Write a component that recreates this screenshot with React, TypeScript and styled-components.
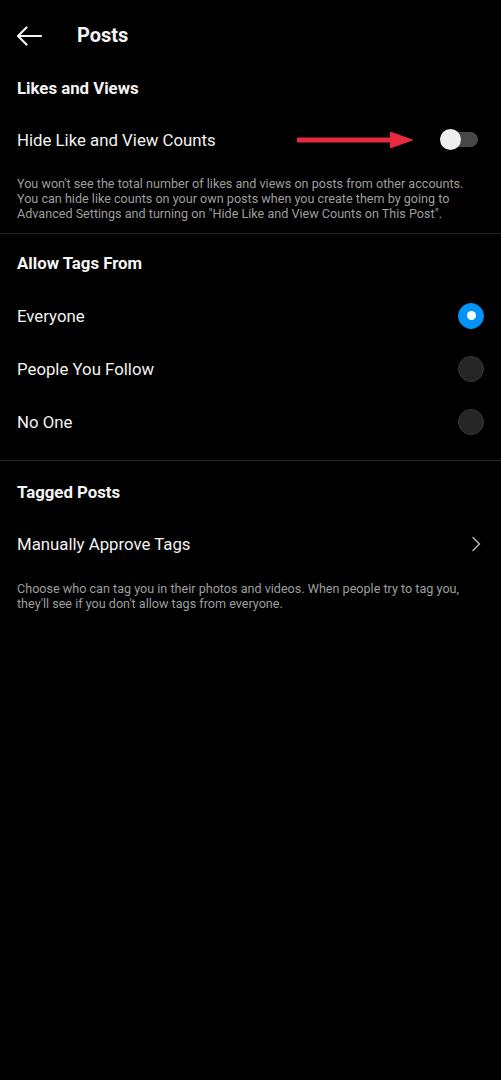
import React, { useState } from 'react';
import styled, { createGlobalStyle } from 'styled-components';

const GlobalStyle = createGlobalStyle`
    html, body {
        margin: 0;
        padding: 0;
        background: #000;
    }
    body {
        font-family: Roboto, "Liberation Sans", Arial, sans-serif;
        -webkit-font-smoothing: antialiased;
    }
`;

const tagOptions = ['Everyone', 'People You Follow', 'No One'];

const App: React.FC = () => {
    const [tagsFrom, setTagsFrom] = useState('Everyone');
    const [hideCounts, setHideCounts] = useState(false);

    return (
        <Page>
            <GlobalStyle />
            <Header>
                <BackButton aria-label="Back">
                    <svg width="26" height="20" viewBox="0 0 26 20" fill="none">
                        <path d="M25 10H2M10.5 1.5L2 10l8.5 8.5" stroke="#f2f2f2" strokeWidth="2.2" strokeLinecap="round" strokeLinejoin="round" />
                    </svg>
                </BackButton>
                <Title>Posts</Title>
            </Header>

            <Section>
                <SectionTitle>Likes and Views</SectionTitle>
                <Row $top={7}>
                    <RowLabel>Hide Like and View Counts</RowLabel>
                    <Pointer width="118" height="18" viewBox="0 0 118 18">
                        <rect x="0" y="6.5" width="96" height="5" fill="#e8293f" />
                        <path d="M93 0.5L117 9L93 17.5Z" fill="#e8293f" />
                    </Pointer>
                    <Toggle $on={hideCounts} onClick={() => setHideCounts(!hideCounts)}>
                        <Thumb $on={hideCounts} />
                    </Toggle>
                </Row>
                <Note $top={10} $bottom={12}>
                    You won't see the total number of likes and views on posts from other accounts.<br />
                    You can hide like counts on your own posts when you create them by going to<br />
                    Advanced Settings and turning on "Hide Like and View Counts on This Post".
                </Note>
            </Section>

            <Divider />

            <Section>
                <SectionTitle $top={11}>Allow Tags From</SectionTitle>
                <Options>
                    {tagOptions.map((opt) => (
                        <Row key={opt} onClick={() => setTagsFrom(opt)}>
                            <RowLabel>{opt}</RowLabel>
                            <Radio $checked={tagsFrom === opt} />
                        </Row>
                    ))}
                </Options>
            </Section>

            <Divider />

            <Section>
                <SectionTitle $top={13}>Tagged Posts</SectionTitle>
                <Row $top={7}>
                    <RowLabel>Manually Approve Tags</RowLabel>
                    <Chevron width="10" height="16" viewBox="0 0 10 16" fill="none">
                        <path d="M2 1.5L8.5 8L2 14.5" stroke="#b0b0b0" strokeWidth="1.6" strokeLinecap="round" strokeLinejoin="round" />
                    </Chevron>
                </Row>
                <Note $top={11} $bottom={0}>
                    Choose who can tag you in their photos and videos. When people try to tag you,<br />
                    they'll see if you don't allow tags from everyone.
                </Note>
            </Section>
        </Page>
    );
};

export default App;

const Page = styled.div`
    width: 501px;
    min-height: 1080px;
    background: #000;
    color: #f5f5f5;
    user-select: none;
`;

const Header = styled.div`
    height: 70px;
    display: flex;
    align-items: center;
    padding-left: 16px;
    box-sizing: border-box;
`;

const BackButton = styled.button`
    display: flex;
    align-items: center;
    background: none;
    border: none;
    padding: 0;
    width: 26px;
    height: 20px;
    margin-top: 1px;
    cursor: pointer;
`;

const Title = styled.h1`
    margin: 0 0 0 35px;
    font-size: 20px;
    font-weight: 700;
    color: #f5f5f5;
`;

const Section = styled.div`
    display: flex;
    flex-direction: column;
`;

const SectionTitle = styled.div<{ $top?: number }>`
    height: 36px;
    margin-top: ${(p) => p.$top ?? 0}px;
    display: flex;
    align-items: center;
    padding: 0 17px;
    font-size: 16.8px;
    font-weight: 700;
    color: #f5f5f5;
`;

const Options = styled.div`
    display: flex;
    flex-direction: column;
    margin-top: 8px;
    padding-bottom: 12px;
`;

const Row = styled.div<{ $top?: number }>`
    position: relative;
    height: 53px;
    margin-top: ${(p) => p.$top ?? 0}px;
    display: flex;
    align-items: center;
    justify-content: space-between;
    padding: 0 17px;
    cursor: pointer;
`;

const RowLabel = styled.span`
    font-size: 16.8px;
    font-weight: 400;
    color: #f2f2f2;
`;

const Pointer = styled.svg`
    position: absolute;
    left: 297px;
    top: 50%;
    transform: translateY(-50%);
`;

const Toggle = styled.div<{ $on: boolean }>`
    position: relative;
    width: 38px;
    height: 15px;
    margin-right: 6px;
    border-radius: 8px;
    background: ${(p) => (p.$on ? '#0095f6' : '#474747')};
`;

const Thumb = styled.div<{ $on: boolean }>`
    position: absolute;
    top: 50%;
    left: ${(p) => (p.$on ? '18px' : '0')};
    width: 21px;
    height: 21px;
    margin-top: -10.5px;
    border-radius: 50%;
    background: #efefef;
`;

const Radio = styled.div<{ $checked: boolean }>`
    width: 26px;
    height: 26px;
    border-radius: 50%;
    box-sizing: border-box;
    background: ${(p) => (p.$checked ? '#0095f6' : '#262626')};
    border: 1px solid ${(p) => (p.$checked ? '#0095f6' : '#383838')};
    display: flex;
    align-items: center;
    justify-content: center;

    &::after {
        content: '';
        display: ${(p) => (p.$checked ? 'block' : 'none')};
        width: 9px;
        height: 9px;
        border-radius: 50%;
        background: #fff;
    }
`;

const Chevron = styled.svg`
    margin-right: 3px;
`;

const Note = styled.p<{ $top: number; $bottom: number }>`
    margin: ${(p) => p.$top}px 0 0;
    padding: 0 17px ${(p) => p.$bottom}px;
    font-size: 12.6px;
    line-height: 15px;
    color: #9e9e9e;
    white-space: nowrap;
`;

const Divider = styled.div`
    height: 1px;
    background: #262626;
`;
